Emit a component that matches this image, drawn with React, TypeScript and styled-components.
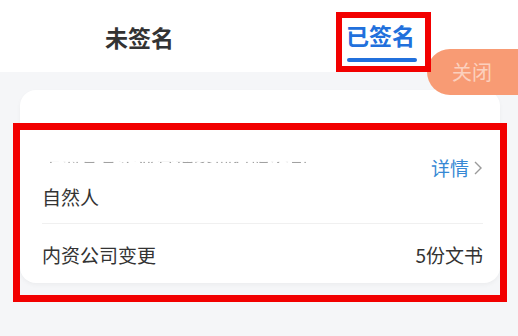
import React from "react";
import styled, { createGlobalStyle } from "styled-components";

const GlobalStyle = createGlobalStyle`
  html, body {
    margin: 0;
    padding: 0;
    background: #f5f6f8;
  }
  body {
    font-family: "Noto Sans CJK SC", "Noto Sans", sans-serif;
    color: #333;
  }
`;

const Page = styled.div`
  position: relative;
  width: 518px;
  height: 336px;
  overflow: hidden;
  background: #f5f6f8;
`;

const TabBar = styled.div`
  display: flex;
  height: 72px;
  padding: 0 20px;
  background: #fff;
`;

const Tab = styled.div`
  flex: 1;
  display: flex;
  flex-direction: column;
  align-items: center;
  padding-top: 19px;
`;

const TabLabel = styled.span<{ $active?: boolean }>`
  font-size: 23px;
  line-height: 32px;
  font-weight: 700;
  color: ${(p) => (p.$active ? "#2170dc" : "#333")};
  margin-top: ${(p) => (p.$active ? "0" : "2px")};
  margin-left: ${(p) => (p.$active ? "4px" : "0")};
`;

const Underline = styled.div`
  width: 70px;
  height: 4px;
  margin-top: 7px;
  margin-left: 6px;
  border-radius: 2px;
  background: #2170dc;
`;

const Content = styled.div`
  padding: 18px 18px 0 20px;
`;

const Card = styled.div`
  background: #fff;
  border-radius: 16px;
  padding: 60px 17px 14px 22px;
  box-shadow: 0 2px 4px rgba(0, 0, 0, 0.04);
`;

const Row = styled.div<{ $gap?: number }>`
  display: flex;
  align-items: center;
  justify-content: space-between;
  height: 28px;
  margin-top: ${(p) => p.$gap || 0}px;
`;

const Text = styled.span`
  font-size: 19px;
  line-height: 28px;
  color: #333;
`;

const band = `linear-gradient(
    to bottom,
    transparent 0%,
    transparent 48%,
    rgba(0, 0, 0, 0.5) 50%,
    rgba(0, 0, 0, 0.5) 52%,
    transparent 54%,
    transparent 100%
  )`;

const Hidden = styled.span`
  font-size: 19px;
  line-height: 28px;
  color: #444;
  margin-top: -4px;
  -webkit-mask-image: ${band};
  mask-image: ${band};
`;

const Detail = styled.span`
  display: flex;
  align-items: center;
  gap: 4px;
  font-size: 19px;
  line-height: 28px;
  color: #3688d4;
  margin-top: 8px;
`;

const Divider = styled.div`
  height: 1px;
  background: #f0f0f0;
  margin: 12px 0 17px;
`;

const CloseButton = styled.div`
  position: absolute;
  left: 427px;
  top: 49px;
  width: 100px;
  height: 46px;
  border-radius: 23px 0 0 23px;
  background: #f89b74;
  color: rgba(255, 255, 255, 0.55);
  font-size: 20px;
  line-height: 46px;
  padding-left: 25px;
  box-sizing: border-box;
`;

const Mark = styled.div<{ $x: number; $y: number; $w: number; $h: number; $b: number }>`
  position: absolute;
  left: ${(p) => p.$x}px;
  top: ${(p) => p.$y}px;
  width: ${(p) => p.$w}px;
  height: ${(p) => p.$h}px;
  border: ${(p) => p.$b}px solid #f20000;
  box-sizing: border-box;
  pointer-events: none;
`;

const Chevron = () => (
  <svg width="10" height="16" viewBox="0 0 10 16" fill="none">
    <path d="M2 2l6 6-6 6" stroke="#9a9a9a" strokeWidth="1.4" />
  </svg>
);

const App = () => {
  return (
    <Page>
      <GlobalStyle />
      <TabBar>
        <Tab>
          <TabLabel>未签名</TabLabel>
        </Tab>
        <Tab>
          <TabLabel $active>已签名</TabLabel>
          <Underline />
        </Tab>
      </TabBar>

      <Content>
        <Card>
          <Row>
            <Hidden>上海某某企业管理咨询有限公司</Hidden>
            <Detail>
              详情
              <Chevron />
            </Detail>
          </Row>
          <Row $gap={5}>
            <Text>自然人</Text>
          </Row>
          <Divider />
          <Row>
            <Text>内资公司变更</Text>
            <Text>5份文书</Text>
          </Row>
        </Card>
      </Content>

      <CloseButton>关闭</CloseButton>

      <Mark $x={336} $y={12} $w={95} $h={60} $b={6} />
      <Mark $x={13} $y={123} $w={494} $h={179} $b={7} />
    </Page>
  );
};

export default App;
